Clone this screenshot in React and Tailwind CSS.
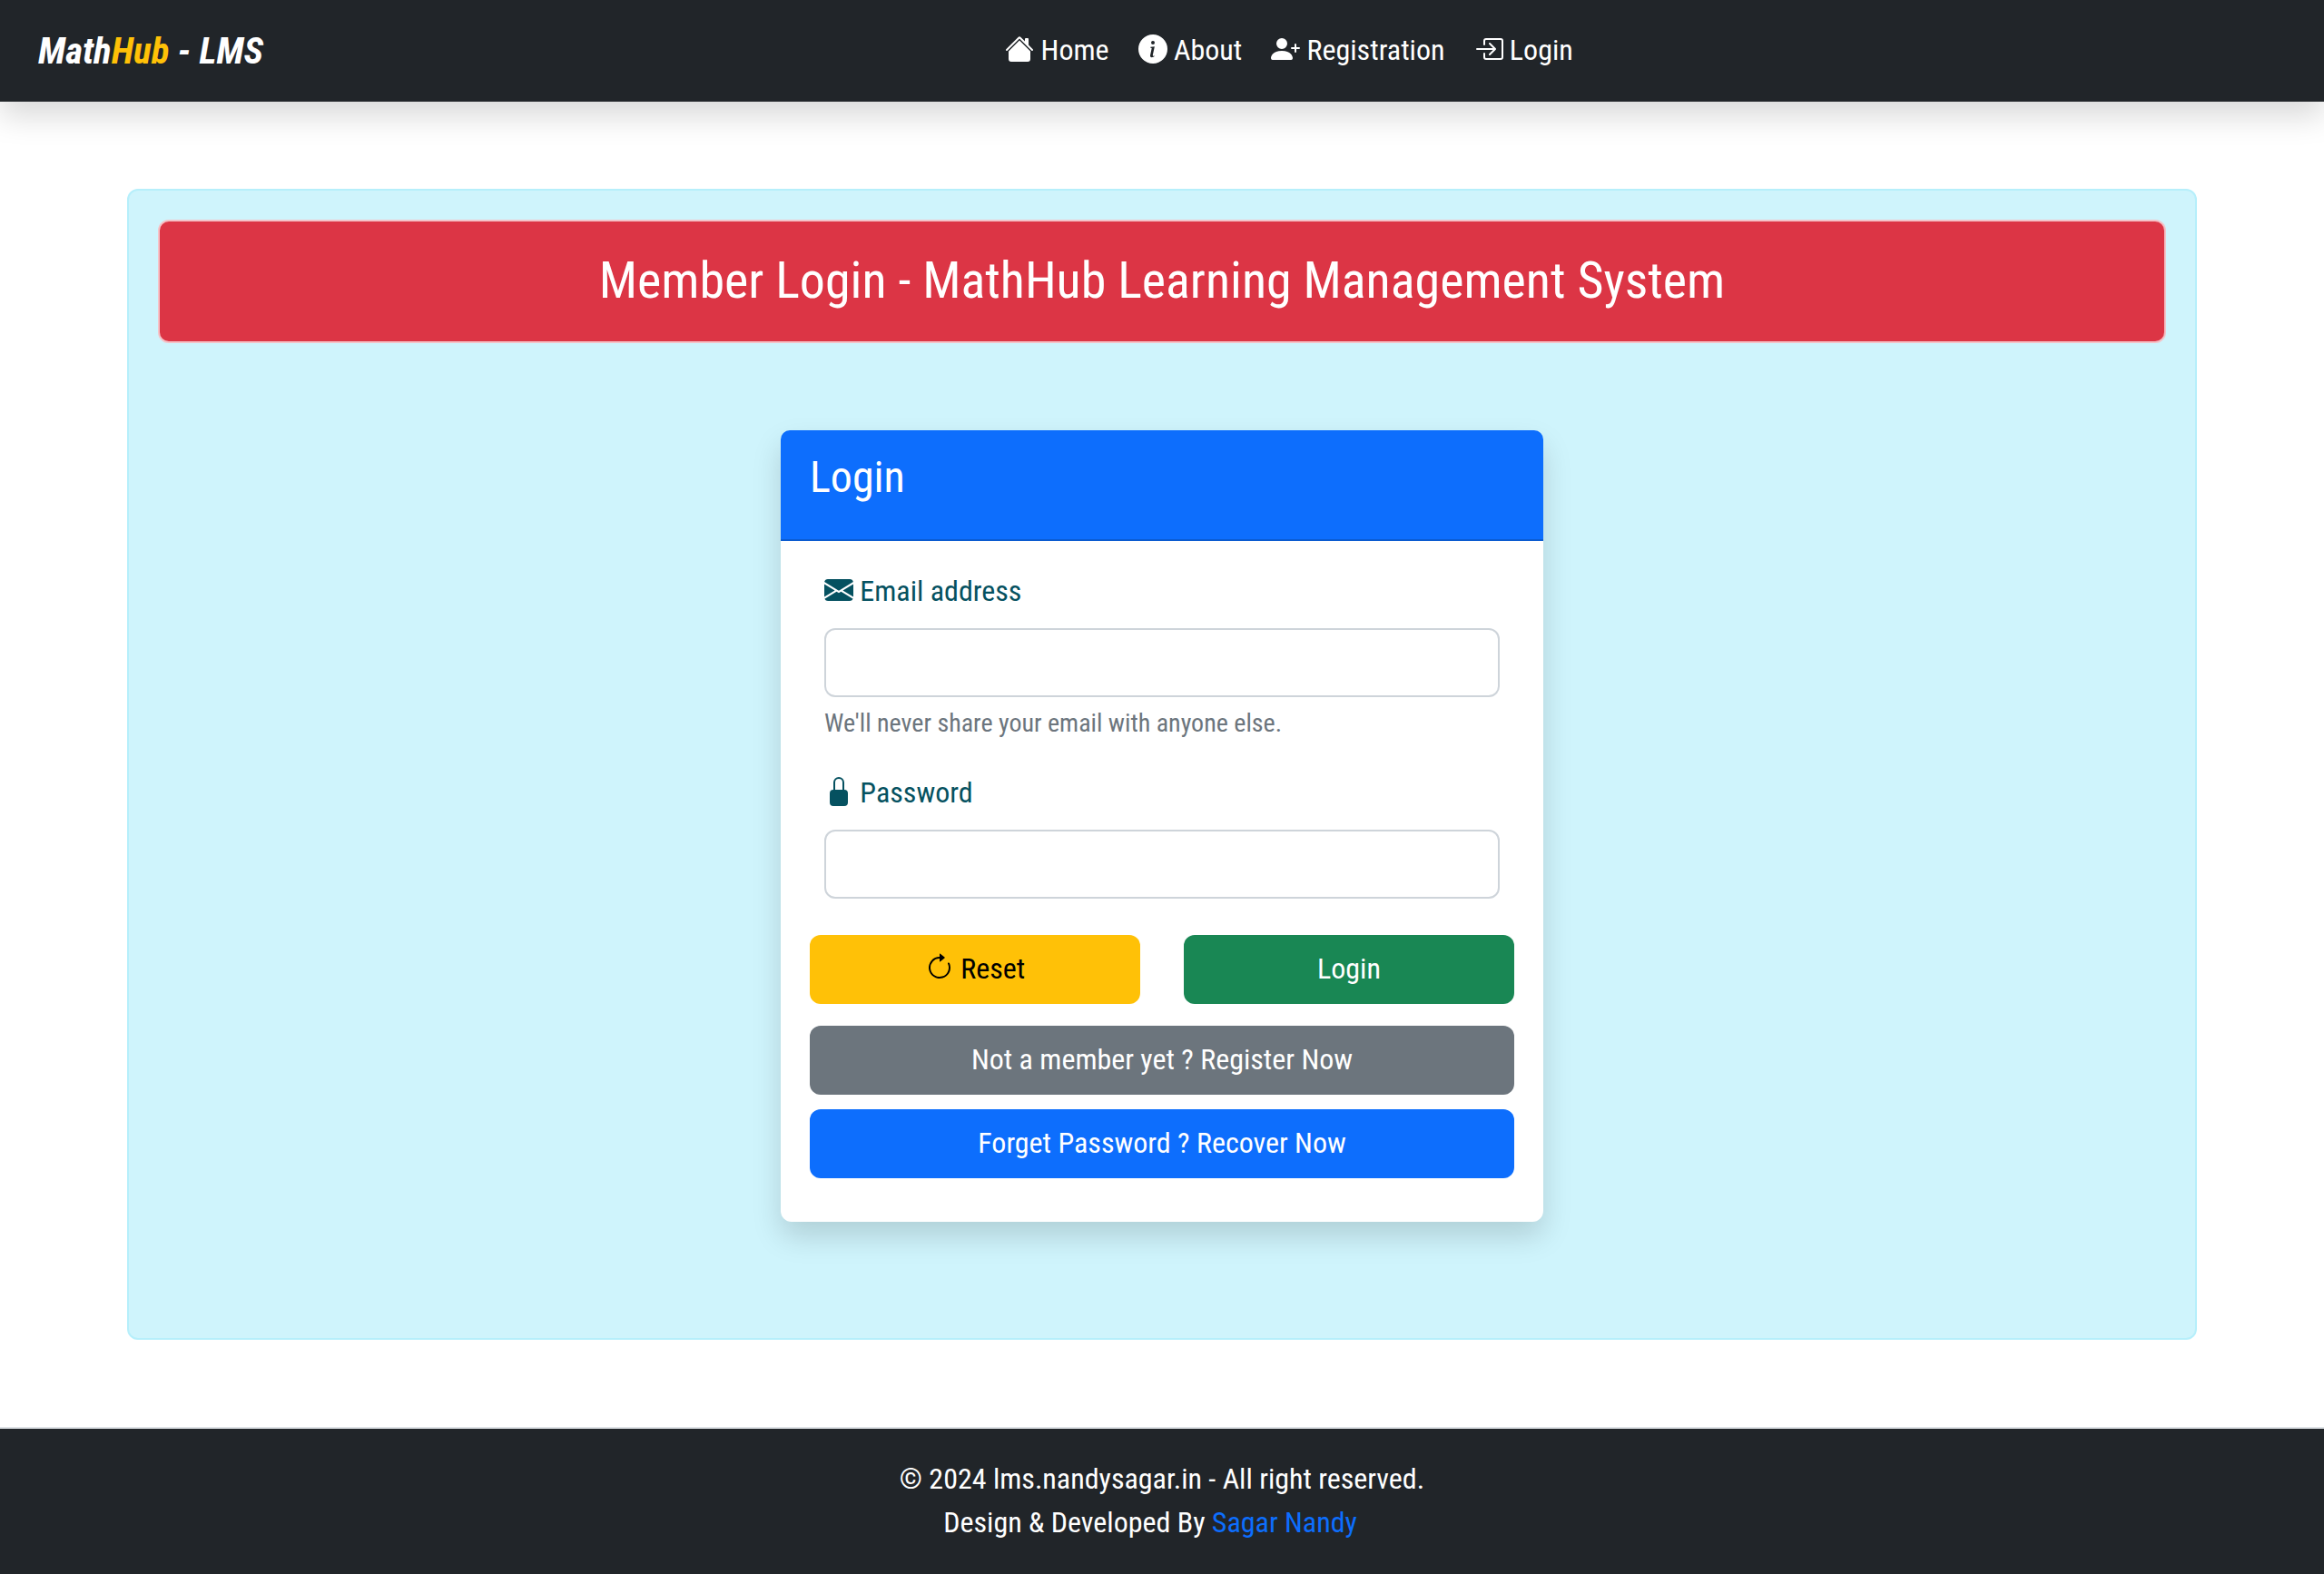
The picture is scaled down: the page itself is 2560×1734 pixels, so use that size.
import {
  BsHouseFill,
  BsInfoCircleFill,
  BsPersonPlusFill,
  BsBoxArrowInRight,
  BsEnvelopeFill,
  BsLockFill,
  BsArrowClockwise,
} from "react-icons/bs";

const nav = [
  { label: "Home", Icon: BsHouseFill },
  { label: "About", Icon: BsInfoCircleFill },
  { label: "Registration", Icon: BsPersonPlusFill },
  { label: "Login", Icon: BsBoxArrowInRight },
];

function IconText({ Icon, children }) {
  return (
    <>
      <Icon className="inline align-[-4px]" aria-hidden="true" /> {children}
    </>
  );
}

function Field({ id, type, label, Icon, help }) {
  return (
    <div className="mx-4 mb-8">
      <label htmlFor={id} className="mb-[18px] block leading-[46px] text-[#055160]">
        <IconText Icon={Icon}>{label}</IconText>
      </label>
      <input
        id={id}
        type={type}
        aria-describedby={help ? `${id}-help` : undefined}
        className="block w-full rounded-xl border-2 border-[#ced4da] bg-white px-6 py-3 leading-[48px] outline-none focus:border-[#86b7fe]"
      />
      {help && (
        <p id={`${id}-help`} className="mt-2 text-[28px] leading-[42px] text-[#6c757d]">
          {help}
        </p>
      )}
    </div>
  );
}

const button = "block w-full rounded-xl px-6 pt-[14px] pb-4 leading-[46px] text-center cursor-pointer";

export default function App() {
  return (
    <div className="flex min-h-screen flex-col bg-white font-['Roboto_Condensed',Roboto,sans-serif] text-[32px] leading-[48px] text-[#212529]">
      <header className="grid h-28 grid-cols-[1fr_auto_1fr] items-center bg-[#212529] px-[42px] text-white shadow-[0_16px_32px_rgba(0,0,0,0.15)]">
        <a href="#" className="text-[41px] font-bold italic">
          Math<span className="text-[#ffc107]">Hub</span> - LMS
        </a>
        <nav className="flex gap-8 pb-[2px] pl-[280px]">
          {nav.map(({ label, Icon }) => (
            <a key={label} href="#" className="whitespace-nowrap">
              <IconText Icon={Icon}>{label}</IconText>
            </a>
          ))}
        </nav>
      </header>

      <main className="mx-[140px] my-24 rounded-xl border-2 border-[#b6effb] bg-[#cff4fc] p-8 pb-32">
        <h1 className="rounded-xl border-2 border-[#f5c2c7] bg-[#dc3545] px-8 pt-8 pb-[34px] text-center text-[56px] leading-[66px] text-white">
          Member Login - MathHub Learning Management System
        </h1>
        <form className="mx-auto mt-24 w-full max-w-[840px] rounded-xl bg-white shadow-[0_16px_32px_rgba(0,0,0,0.15)]">
          <h2 className="rounded-t-[10px] border-b-2 border-[#0b5bd0] bg-[#0d6efd] px-8 pt-6 pb-10 text-5xl leading-[56px] text-white">
            Login
          </h2>
          <div className="px-8 pt-8 pb-12">
            <Field
              id="email"
              type="email"
              label="Email address"
              Icon={BsEnvelopeFill}
              help="We'll never share your email with anyone else."
            />
            <Field id="password" type="password" label="Password" Icon={BsLockFill} />
            <div className="grid grid-cols-2 gap-12 pt-2">
              <button type="reset" className={`${button} bg-[#ffc107] text-black`}>
                <IconText Icon={BsArrowClockwise}>Reset</IconText>
              </button>
              <button type="submit" className={`${button} bg-[#198754] text-white`}>
                Login
              </button>
            </div>
            <a href="#" className={`${button} mt-6 bg-[#6c757d] text-white`}>
              Not a member yet ? Register Now
            </a>
            <a href="#" className={`${button} mt-4 bg-[#0d6efd] text-white`}>
              Forget Password ? Recover Now
            </a>
          </div>
        </form>
      </main>

      <footer className="border-t-2 border-[#dee2e6] bg-[#212529] pt-[31px] pb-[33px] text-center text-white">
        <p>© 2024 lms.nandysagar.in - All right reserved.</p>
        <p>
          Design &amp; Developed By{" "}
          <a href="#" className="mr-[26px] text-[#0d6efd]">
            Sagar Nandy
          </a>
        </p>
      </footer>
    </div>
  );
}
